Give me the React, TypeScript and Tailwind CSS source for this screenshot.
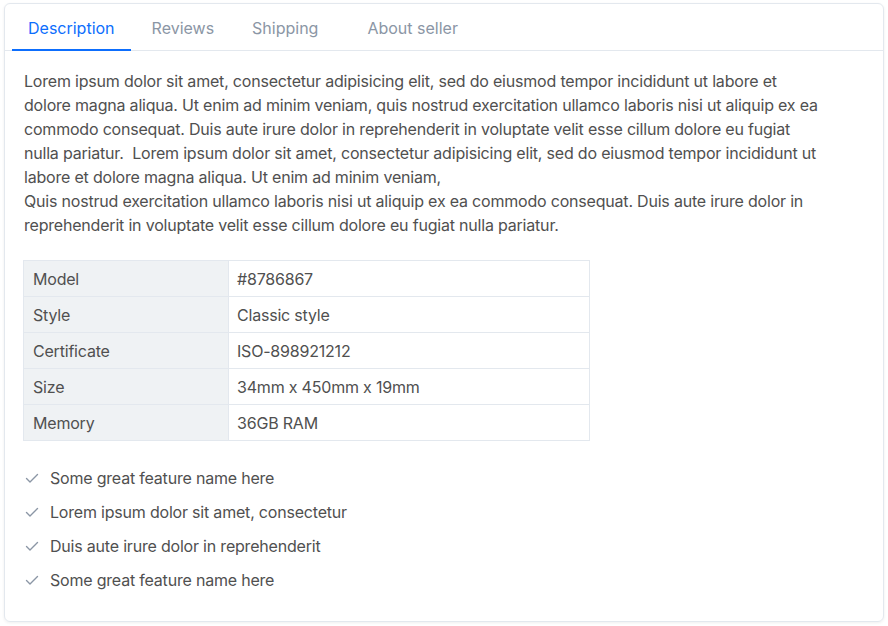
import React, { useState } from 'react';

const tabs = ['Description', 'Reviews', 'Shipping', 'About seller'];
const tabSpacing = ['ml-0', 'ml-[5px]', 'ml-[6px]', 'ml-[17px]'];

const specs = [
  { label: 'Model', value: '#8786867' },
  { label: 'Style', value: 'Classic style' },
  { label: 'Certificate', value: 'ISO-898921212' },
  { label: 'Size', value: '34mm x 450mm x 19mm' },
  { label: 'Memory', value: '36GB RAM' },
];

const features = [
  'Some great feature name here',
  'Lorem ipsum dolor sit amet, consectetur',
  'Duis aute irure dolor in reprehenderit',
  'Some great feature name here',
];

const Check: React.FC = () => (
  <svg width="16" height="16" viewBox="0 0 16 16" fill="none" className="text-[#8b96a5] shrink-0">
    <path d="M2.5 8.5l3.5 3.5 7.5-7.5" stroke="currentColor" strokeWidth="1.4" strokeLinecap="round" strokeLinejoin="round" />
  </svg>
);

const App: React.FC = () => {
  const [active, setActive] = useState(0);

  return (
    <div className="bg-white p-[3px_4px] w-[888px] h-[626px]" style={{ fontFamily: 'Inter, "Liberation Sans", sans-serif' }}>
      <div className="border border-[#e3e8ee] rounded-md shadow-[0_1px_3px_rgba(56,56,56,0.08)] h-[619px]">
        <div className="flex border-b border-[#e3e8ee] pl-[7px] h-[47px]">
          {tabs.map((tab, i) => (
            <button
              key={tab}
              onClick={() => setActive(i)}
              className={`${tabSpacing[i]} px-4 pt-[2px] text-base -mb-px border-b-2 ${
                active === i ? 'text-[#0d6efd] border-[#0d6efd]' : 'text-[#8b96a5] border-transparent'
              }`}
            >
              {tab}
            </button>
          ))}
        </div>

        <div className="pl-[19px] pr-5 pt-[18px] text-[#505050] text-base leading-6 tracking-[-0.2px]">
          <p className="max-w-[802px]">
            Lorem ipsum dolor sit amet, consectetur adipisicing elit, sed do eiusmod tempor incididunt ut labore et dolore magna aliqua. Ut enim ad minim veniam, quis nostrud exercitation ullamco laboris nisi ut aliquip ex ea commodo consequat. Duis aute irure dolor in reprehenderit in voluptate velit esse cillum dolore eu fugiat nulla pariatur.&nbsp; Lorem ipsum dolor sit amet, consectetur adipisicing elit, sed do eiusmod tempor incididunt ut labore et dolore magna aliqua. Ut enim ad minim veniam,
            <br />
            Quis nostrud exercitation ullamco laboris nisi ut aliquip ex ea commodo consequat. Duis aute irure dolor in reprehenderit in voluptate velit esse cillum dolore eu fugiat nulla pariatur.
          </p>

          <table className="mt-[23px] w-[567px] -ml-px border-collapse border border-[#e3e8ee]">
            <tbody>
              {specs.map((row) => (
                <tr key={row.label} className="h-9">
                  <th className="w-[205px] bg-[#eff2f4] border border-[#e3e8ee] px-[9px] text-left font-normal">{row.label}</th>
                  <td className="border border-[#e3e8ee] pl-[8px] pr-[9px]">{row.value}</td>
                </tr>
              ))}
            </tbody>
          </table>

          <ul className="mt-[25px] flex flex-col gap-[10px]">
            {features.map((f, i) => (
              <li key={i} className="flex items-center gap-[10px]">
                <Check />
                <span>{f}</span>
              </li>
            ))}
          </ul>
        </div>
      </div>
    </div>
  );
};

export default App;
